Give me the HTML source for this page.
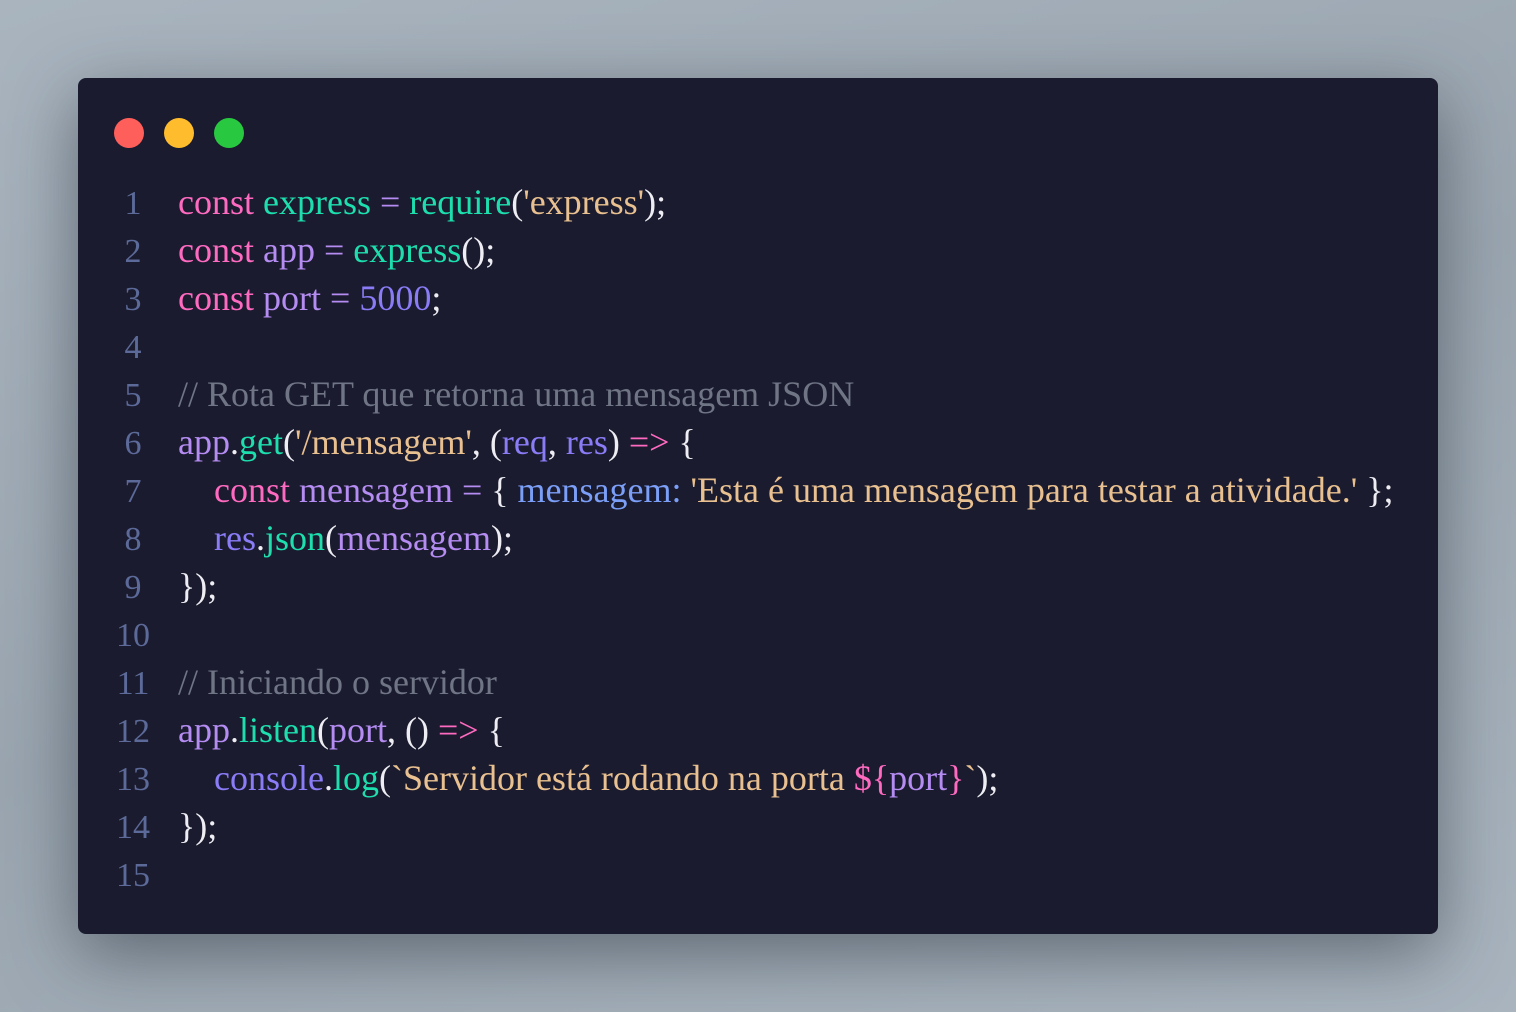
<!DOCTYPE html>
<html><head><meta charset="utf-8"><style>
html,body{margin:0;width:1516px;height:1012px;overflow:hidden;background:linear-gradient(160deg,#a9b4bf,#9aa5b0 50%,#a9b4bf);}
*{font-family:"Liberation Serif","Times New Roman",serif !important;}
.card{position:absolute;left:78px;top:78px;width:1360px;height:856px;background:#1b1b2f;border-radius:8px;box-shadow:0 20px 70px rgba(40,50,60,.55);}
.dot{position:absolute;top:40px;width:30px;height:30px;border-radius:50%;}
.code{position:absolute;left:0;top:100px;font-size:36px;line-height:48px;color:#e8e8f0;white-space:pre;}
.code>div{height:48px;}
.ln{display:inline-block;width:110px;margin-right:-10px;text-align:center;color:#5c6a99;font-size:34px;}
.in{display:inline-block;width:36px;}
.k{color:#ff6ac1}.t{color:#1ddfae}.s{color:#e9c08f}.v{color:#b48cf2}.n{color:#8a7cf7}.c{color:#6f7585}.b{color:#7b9ef7}.w{color:#ededf3}
</style></head><body>
<div class="card">
<div class="dot" style="left:36px;background:#ff5f5a"></div>
<div class="dot" style="left:86px;background:#ffbd2e"></div>
<div class="dot" style="left:136px;background:#28c940"></div>
<div class="code"><div><span class="ln">1</span><span class="k">const</span> <span class="t">express</span> <span class="v">=</span> <span class="t">require</span><span class="w">(</span><span class="s">'express'</span><span class="w">);</span></div><div><span class="ln">2</span><span class="k">const</span> <span class="v">app</span> <span class="v">=</span> <span class="t">express</span><span class="w">();</span></div><div><span class="ln">3</span><span class="k">const</span> <span class="v">port</span> <span class="v">=</span> <span class="n">5000</span><span class="w">;</span></div><div><span class="ln">4</span></div><div><span class="ln">5</span><span class="c">// Rota GET que retorna uma mensagem JSON</span></div><div><span class="ln">6</span><span class="v">app</span><span class="w">.</span><span class="t">get</span><span class="w">(</span><span class="s">'/mensagem'</span><span class="w">, (</span><span class="n">req</span><span class="w">, </span><span class="n">res</span><span class="w">)</span> <span class="k">=&gt;</span> <span class="w">{</span></div><div><span class="ln">7</span><span class="in"></span><span class="k">const</span> <span class="v">mensagem</span> <span class="v">=</span> <span class="w">{</span> <span class="b">mensagem:</span> <span class="s">'Esta é uma mensagem para testar a atividade.'</span> <span class="w">};</span></div><div><span class="ln">8</span><span class="in"></span><span class="n">res</span><span class="w">.</span><span class="t">json</span><span class="w">(</span><span class="v">mensagem</span><span class="w">);</span></div><div><span class="ln">9</span><span class="w">});</span></div><div><span class="ln">10</span></div><div><span class="ln">11</span><span class="c">// Iniciando o servidor</span></div><div><span class="ln">12</span><span class="v">app</span><span class="w">.</span><span class="t">listen</span><span class="w">(</span><span class="v">port</span><span class="w">, ()</span> <span class="k">=&gt;</span> <span class="w">{</span></div><div><span class="ln">13</span><span class="in"></span><span class="n">console</span><span class="w">.</span><span class="t">log</span><span class="w">(</span><span class="s">`Servidor está rodando na porta </span><span class="k">$</span><span class="k">{</span><span class="v">port</span><span class="k">}</span><span class="s">`</span><span class="w">);</span></div><div><span class="ln">14</span><span class="w">});</span></div><div><span class="ln">15</span></div></div>
</div>
</body></html>
